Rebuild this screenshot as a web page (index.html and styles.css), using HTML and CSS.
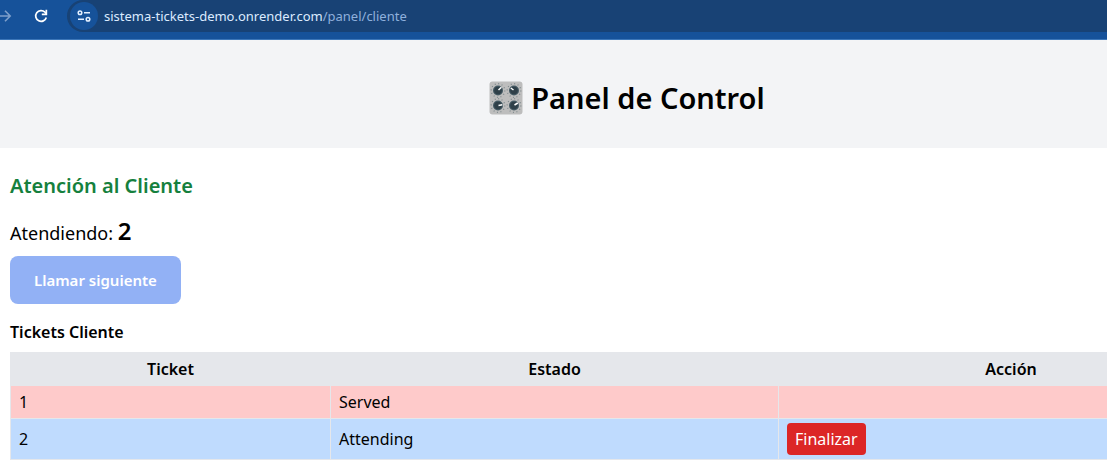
FILE: index.html
```
<!DOCTYPE html>
<html lang="es">
<head>
<meta charset="utf-8">
<meta name="viewport" content="width=device-width, initial-scale=1">
<title>Panel de Control</title>
<link rel="stylesheet" href="styles.css">
</head>
<body>
<nav class="toolbar" aria-label="Navegador">
  <button class="tool forward" aria-label="Adelante" disabled>
    <svg width="12" height="14" viewBox="0 0 12 14" fill="none" stroke="currentColor" stroke-width="1.6"><path d="M0 7h10M5 1.8 10.2 7 5 12.2"/></svg>
  </button>
  <button class="tool reload" aria-label="Recargar">
    <svg width="14" height="14" viewBox="0 0 14 14"><path d="M12.3 8.4A5.4 5.4 0 1 1 11 3.2L12.4 4.8" fill="none" stroke="currentColor" stroke-width="1.7"/><path d="M13.2 0.8v5.4H7.8V4.6h3.7V0.8z" fill="currentColor"/></svg>
  </button>
  <div class="address">
    <button class="site-info" aria-label="Información del sitio">
      <svg width="14" height="12" viewBox="0 0 14 12" fill="none" stroke="currentColor" stroke-width="1.5"><circle cx="3" cy="2.8" r="1.8"/><path d="M7 2.8h6M1 9.2h6"/><circle cx="11" cy="9.2" r="1.8"/></svg>
    </button>
    <a class="url" href="#">sistema-tickets-demo.onrender.com<span class="url-path">/panel/cliente</span></a>
  </div>
</nav>
<div class="page">
  <header class="header">
    <h1 class="title">
      <svg class="knobs" viewBox="0 0 34 34" aria-hidden="true">
        <defs>
          <g id="knob">
            <circle r="6.8" fill="none" stroke="#7c888c" stroke-width="1.2" stroke-dasharray="1 2.56"/>
            <circle r="5" fill="#455a64"/>
            <circle r="3.8" fill="#2f4049"/>
          </g>
        </defs>
        <rect x="0.5" y="0.5" width="33" height="33" rx="3" fill="#bdbdbd"/>
        <use href="#knob" x="9" y="9.5"/><use href="#knob" x="25" y="9.5"/>
        <use href="#knob" x="9" y="24.5"/><use href="#knob" x="25" y="24.5"/>
        <path d="M9.5 9 12.4 6.2M24.5 9 21.8 7M9.5 24.5 13.3 23.8M25.5 24 28.8 22" stroke="#fff" stroke-width="1.5"/>
      </svg>
      <span>Panel de Control</span>
    </h1>
  </header>
  <main class="content">
    <h2 class="section-title">Atención al Cliente</h2>
    <p class="current">Atendiendo: <strong class="current-number">2</strong></p>
    <button class="call-next" disabled>Llamar siguiente</button>
    <h3 class="table-title" id="tickets">Tickets Cliente</h3>
    <table class="tickets" aria-labelledby="tickets">
      <colgroup><col class="col-ticket"><col class="col-status"><col></colgroup>
      <thead><tr><th>Ticket</th><th>Estado</th><th>Acción</th></tr></thead>
      <tbody>
        <tr class="served"><td>1</td><td>Served</td><td></td></tr>
        <tr class="attending"><td>2</td><td>Attending</td><td><button class="finish">Finalizar</button></td></tr>
      </tbody>
    </table>
  </main>
</div>
</body>
</html>
```
FILE: styles.css
```
* { box-sizing: border-box; }
body {
  margin: 0;
  overflow-x: hidden;
  background: #fff;
  color: #000;
  font-family: "Noto Sans", "Open Sans", sans-serif;
  font-size: 16px;
  line-height: 24px;
}
h1, h2, h3, p { margin: 0; }
button { font: inherit; border: 0; padding: 0; }

.toolbar {
  display: flex;
  align-items: center;
  padding-bottom: 6px;
  background: #16529a;
  border-bottom: 1px solid #3c76b8;
}
.tool { display: flex; background: none; color: #fff; }
.forward { color: #7d9fcb; }
.reload { margin: 0 19px 0 22px; }
.address {
  flex: 1;
  display: flex;
  align-items: center;
  gap: 6px;
  padding: 2px 3px;
  background: #184275;
  border-radius: 17px 0 0 17px;
}
.site-info {
  display: flex;
  align-items: center;
  justify-content: center;
  width: 28px;
  height: 28px;
  border-radius: 50%;
  background: #16529a;
  color: #e4f0ff;
}
.toolbar { padding-bottom: 7px; }
.url { color: #dcebff; font-size: 13px; text-decoration: none; }
.url-path { color: #8fb0dc; }

/* The page is wider than the window and runs off its right edge. */
.page { width: calc(100% + 147px); }
.header { padding: 40px 24px 32px; background: #f3f4f6; }
.title {
  display: flex;
  align-items: center;
  justify-content: center;
  gap: 8px;
  font-size: 29px;
  line-height: 36px;
  font-weight: 600;
}
.knobs { width: 34px; height: 34px; }

.content { padding: 24px 10px; }
.section-title { font-size: 20px; line-height: 28px; font-weight: 600; color: #15803d; }
.current { margin: 16px 0 8px; font-size: 18px; line-height: 30px; }
.current-number { font-size: 24px; font-weight: 600; }
.call-next {
  display: block;
  padding: 12px 24px;
  border-radius: 8px;
  background: #92b1f5;
  color: #fff;
  font-size: 15px;
  font-weight: 600;
}
.table-title { margin: 16px 0 8px; font-size: 16px; font-weight: 600; }
.tickets { width: 100%; table-layout: fixed; border-collapse: collapse; }
.col-ticket { width: 320px; }
.col-status { width: 448px; }
.tickets th, .tickets td { border: 1px solid #e5e7eb; padding: 4px 8px; }
.tickets th { background: #e5e7eb; font-weight: 600; }
.tickets td { text-align: left; }
.served { background: #fecaca; }
.attending { background: #bfdbfe; }
.finish { display: block; padding: 4px 8px; border-radius: 4px; background: #dc2626; color: #fff; }
```
